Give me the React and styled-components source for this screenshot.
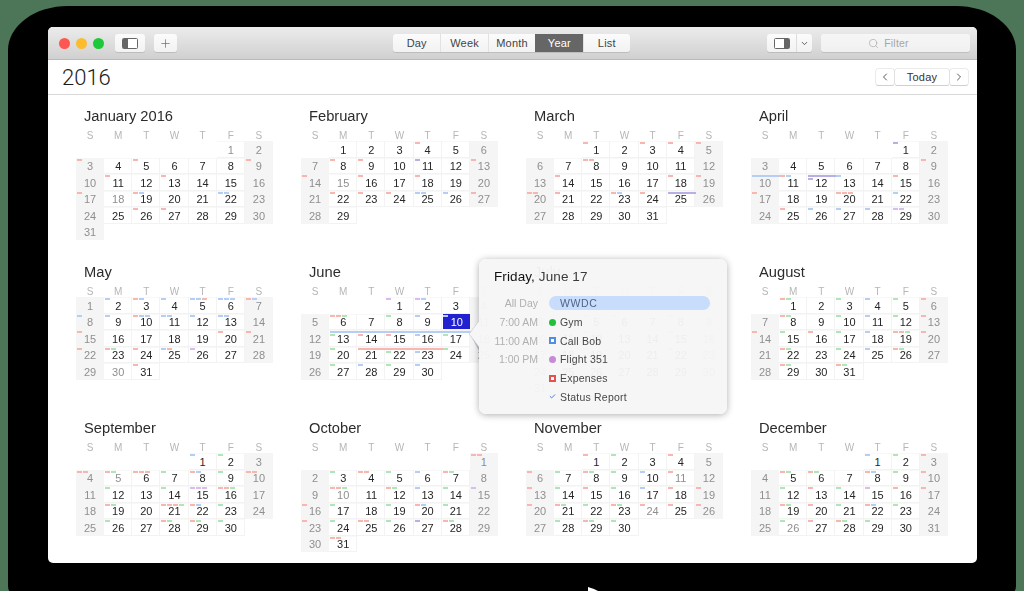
import React from "react";
import styled, { createGlobalStyle } from "styled-components";
import { Check, ChevronDown, ChevronLeft, ChevronRight, Plus, Search } from "lucide-react";

const Global = createGlobalStyle`
  html, body { margin: 0; padding: 0; width: 1024px; height: 591px; overflow: hidden; background: #4d7557; }
  * { box-sizing: border-box; }
  body { font-family: "Liberation Sans", Arial, sans-serif; }
`;

const COLORS = { r: "#f7b7ae", b: "#b4cef6", g: "#b0e6b6", p: "#d8bcf0", v: "#b6b0e4" };

const EVENTS = [
  { 3: "r", 5: "r", 9: "r", 11: "r", 13: "r", 17: "r", 19: "rb", 22: "bb", 26: "r", 27: "r" },
  { 4: "r", 8: "r", 9: "r", 11: "v", 13: "r", 14: "r", 16: "r", 18: "r", 22: "r", 23: "r", 24: "r", 25: "bb", 26: "b", 27: "r" },
  { 1: "r", 3: "r", 4: "r", 5: "r", 8: "rr", 14: "r", 18: "r", 19: "r", 20: "rr", 21: "r", 23: "rb", 24: "r", 25: "V" },
  { 1: "v", 9: "r", 10: "B", 11: "rb", 12: "Vv", 13: "b", 15: "r", 17: "r", 20: "rrr", 22: "b", 25: "r", 26: "b", 27: "b", 28: "b", 29: "pp" },
  { 2: "b", 3: "rb", 4: "b", 5: "bbr", 6: "bbb", 7: "rb", 8: "b", 9: "b", 10: "rbb", 11: "bb", 12: "b", 13: "bb", 15: "r", 20: "r", 21: "r", 22: "r", 23: "rg", 24: "r", 25: "br", 26: "p", 31: "r" },
  { 1: "p", 2: "pb", 6: "rrg", 8: "g", 9: "b", 10: "b", 13: "Bg", 14: "Br", 15: "Br", 16: "Bb", 17: "Bg", 20: "g", 21: "R", 22: "Rg", 23: "Rb", 24: "g", 27: "g", 28: "b", 29: "g", 30: "b" },
  { 1: "b", 5: "g", 6: "b", 8: "r", 12: "g", 15: "r", 19: "g", 22: "r", 26: "g" },
  { 1: "rg", 3: "g", 4: "b", 5: "g", 6: "r", 8: "rg", 10: "g", 11: "b", 12: "g", 13: "r", 14: "r", 15: "g", 16: "r", 17: "g", 18: "b", 19: "rrg", 20: "r", 22: "rg", 24: "g", 25: "b", 26: "rg", 29: "rg", 31: "rg" },
  { 1: "b", 2: "g", 4: "rr", 5: "rg", 6: "rrr", 7: "g", 8: "rb", 9: "g", 10: "rr", 12: "g", 14: "g", 15: "ppp", 16: "rrg", 19: "rg", 21: "rrrg", 22: "rb", 23: "g", 26: "g", 28: "rg", 29: "rg", 30: "g" },
  { 1: "rr", 3: "g", 4: "rr", 5: "g", 6: "b", 7: "rg", 10: "rrg", 12: "rg", 13: "b", 14: "g", 15: "p", 16: "r", 17: "g", 19: "g", 20: "rb", 21: "g", 23: "r", 24: "g", 25: "rr", 26: "g", 27: "v", 28: "rg", 31: "rr" },
  { 1: "r", 2: "g", 4: "r", 6: "r", 7: "g", 8: "rg", 9: "g", 10: "b", 11: "r", 13: "r", 14: "g", 15: "r", 16: "g", 17: "b", 18: "r", 19: "r", 20: "r", 21: "rg", 22: "g", 23: "rg", 24: "r", 25: "r", 26: "r", 28: "g", 29: "rg", 30: "g" },
  { 1: "b", 2: "g", 3: "r", 5: "rg", 6: "rg", 8: "rb", 9: "g", 10: "r", 12: "g", 13: "r", 14: "g", 15: "p", 16: "r", 17: "r", 19: "rg", 20: "r", 21: "g", 22: "rb", 23: "g", 26: "g", 27: "r", 28: "rg", 29: "g" },
];

const HOLIDAYS = { 0: [1, 18], 1: [15], 4: [30], 6: [4], 8: [5], 9: [10], 10: [11, 24], 11: [26] };
const NAMES = ["January 2016", "February", "March", "April", "May", "June", "July", "August", "September", "October", "November", "December"];
const WEEK = ["S", "M", "T", "W", "T", "F", "S"];

const Frame = styled.div`
  width: 1008px;
  height: 592px;
  margin: 6px 8px 0;
  padding: 21px 39px 0 40px;
  background: #000;
  border-radius: 60px 60px 14px 14px / 44px 44px 12px 12px;
  position: relative;
`;
const Win = styled.div`
  position: relative;
  width: 929px;
  height: 536px;
  background: #fff;
  border-radius: 5px;
  overflow: hidden;
  will-change: opacity;
`;
const TitleBar = styled.div`
  height: 33px;
  display: grid;
  grid-template-columns: 1fr auto 1fr;
  align-items: center;
  padding: 0 7px 0 11px;
  background: linear-gradient(#ececec, #d0d0d0);
  border-bottom: 1px solid #b9b9b9;
`;
const Left = styled.div`display: flex; align-items: center;`;
const Right = styled.div`display: flex; align-items: center; justify-content: flex-end;`;
const Light = styled.span`
  width: 11px;
  height: 11px;
  margin-right: 6px;
  border-radius: 50%;
  background: ${(p) => p.$c};
`;
const ToolBtn = styled.div`
  height: 18px;
  width: ${(p) => p.$w}px;
  margin-left: ${(p) => p.$ml || 0}px;
  display: flex;
  align-items: center;
  justify-content: center;
  background: linear-gradient(#fbfbfb, #f2f2f2);
  border-radius: 3px;
  box-shadow: 0 1px 0 #bdbdbd;
  color: #6a6a6a;
`;
const Seg = styled.div`
  display: flex;
  height: 18px;
  border-radius: 3px;
  box-shadow: 0 1px 0 #bdbdbd;
  overflow: hidden;
  margin-right: 6px;
`;
const SegItem = styled.div`
  width: 47.4px;
  display: flex;
  align-items: center;
  justify-content: center;
  font-size: 11px;
  letter-spacing: 0.2px;
  color: ${(p) => (p.$on ? "#fff" : "#444")};
  background: ${(p) => (p.$on ? "#666" : "linear-gradient(#fbfbfb,#f2f2f2)")};
  border-left: 1px solid ${(p) => (p.$on ? "#666" : "#e2e2e2")};
  &:first-child { border-left: 0; }
`;
const ViewBtn = styled.div`
  display: flex;
  width: 45px;
  height: 18px;
  margin-right: 9px;
  border-radius: 3px;
  box-shadow: 0 1px 0 #bdbdbd;
  background: linear-gradient(#fbfbfb, #f2f2f2);
`;
const ViewMain = styled.div`
  width: 30px;
  display: flex;
  align-items: center;
  justify-content: center;
  border-right: 1px solid #dcdcdc;
`;
const ViewArrow = styled.div`
  flex: 1;
  display: flex;
  align-items: center;
  justify-content: center;
  color: #555;
`;
const Filter = styled.div`
  width: 149px;
  height: 18px;
  display: flex;
  align-items: center;
  justify-content: center;
  gap: 5px;
  padding-right: 14px;
  border-radius: 3px;
  box-shadow: 0 1px 0 #c0c0c0;
  background: linear-gradient(#f6f6f6, #f0f0f0);
  color: #a6a6a6;
  font-size: 10.5px;
  letter-spacing: 0.2px;
`;
const YearBar = styled.div`
  height: 35px;
  display: flex;
  align-items: center;
  justify-content: space-between;
  padding: 0 9px 0 14px;
  border-bottom: 1px solid #d9d9d9;
`;
const YearTitle = styled.div`
  font-family: Roboto, "Liberation Sans", sans-serif;
  font-weight: 300;
  font-size: 22px;
  color: #1c1c1c;
`;
const Nav = styled.div`display: flex; align-items: center; gap: 1px;`;
const NavBtn = styled.div`
  height: 16px;
  width: ${(p) => p.$w}px;
  display: flex;
  align-items: center;
  justify-content: center;
  border-radius: 2px;
  background: #fff;
  color: #333;
  font-size: 11px;
  letter-spacing: 0.2px;
  box-shadow: 0 0 0 0.5px #d8d8d8, 0 1px 0 #c8c8c8;
`;
const Months = styled.div`
  display: grid;
  grid-template-columns: repeat(4, 225px);
  grid-auto-rows: 156px;
  padding: 11px 0 0 28px;
`;
const Month = styled.div`display: flex; flex-direction: column;`;
const MonthName = styled.div`
  height: 19px;
  line-height: 21px;
  padding-left: 8px;
  font-size: 14.7px;
  color: #2c2c2c;
`;
const Week = styled.div`
  display: grid;
  grid-template-columns: repeat(7, 28.15px);
  height: 16px;
  padding-top: 3px;
`;
const WeekDay = styled.div`
  text-align: center;
  font-size: 10px;
  line-height: 15px;
  color: #b6b6b6;
`;
const Days = styled.div`
  display: grid;
  grid-template-columns: repeat(7, 28.15px);
  grid-auto-rows: 16.5px;
`;
const Day = styled.div`
  position: relative;
  grid-column-start: ${(p) => p.$start || "auto"};
  display: flex;
  align-items: center;
  justify-content: center;
  font-size: 11px;
  padding-top: 1px;
  color: ${(p) => (p.$dim ? "#8f8f8f" : "#262626")};
  background: ${(p) => (p.$weekend ? "#f5f5f5" : "#fff")};
  box-shadow: ${(p) => (p.$weekend ? "none" : "inset -1px -1px 0 #f3f3f3, inset 0 1px 0 #f8f8f8")};
`;
const Selected = styled.span`
  position: absolute;
  inset: 0 -1px 1px 1px;
  display: flex;
  align-items: center;
  justify-content: center;
  padding-top: 1px;
  background: #2121cf;
  color: #fff;
`;
const Marks = styled.div`
  position: absolute;
  top: 1px;
  left: 1px;
  right: -1px;
  display: flex;
  flex-wrap: wrap;
  gap: 1px;
  z-index: 1;
`;
const Mark = styled.i`
  height: 2px;
  width: ${(p) => (p.$wide ? "100%" : "5px")};
  background: ${(p) => p.$c};
`;
const Popover = styled.div`
  position: absolute;
  left: 431px;
  top: 232px;
  width: 248px;
  height: 155px;
  z-index: 3;
  padding-top: 9px;
  background: rgba(246, 246, 246, 0.96);
  border-radius: 7px;
  box-shadow: 0 1px 7px rgba(0, 0, 0, 0.32);
`;
const Tail = styled.svg`
  position: absolute;
  left: -10px;
  top: 62px;
  overflow: visible;
`;
const PopTitle = styled.div`
  padding-left: 15px;
  height: 18px;
  line-height: 18px;
  font-size: 13.5px;
  color: #3a3a3a;
  letter-spacing: 0.1px;
  b { font-weight: 400; color: #111; }
`;
const PopRows = styled.div`
  display: grid;
  grid-template-columns: 59px 1fr;
  grid-auto-rows: 18.7px;
  column-gap: 11px;
  align-items: center;
  padding-top: 8px;
`;
const Time = styled.div`
  text-align: right;
  font-size: 10.5px;
  color: #b0b0b0;
`;
const Item = styled.div`
  display: flex;
  align-items: center;
  gap: 4px;
  font-size: 10.5px;
  letter-spacing: 0.2px;
  color: #474747;
`;
const Pill = styled.div`
  width: 161px;
  height: 14px;
  line-height: 14px;
  padding-left: 11px;
  border-radius: 7px;
  background: #c8dcfb;
  color: #50648a;
  font-size: 10.5px;
  letter-spacing: 0.6px;
`;
const GlyphBox = styled.span`
  width: 7px;
  height: 7px;
  display: flex;
  align-items: center;
  justify-content: center;
  flex: none;
`;
const Dot = styled(GlyphBox)`
  border-radius: 50%;
  background: ${(p) => p.$c};
`;
const Box = styled(GlyphBox)`
  border: 2px solid ${(p) => p.$c};
  background: #fff;
`;
const Cursor = styled.svg`
  position: absolute;
  left: 580px;
  top: 581px;
`;

function MonthView({ index }) {
  const count = new Date(2016, index + 1, 0).getDate();
  const offset = new Date(2016, index, 1).getDay();
  const days = Array.from({ length: count }, (_, i) => i + 1);
  return (
    <Month>
      <MonthName>{NAMES[index]}</MonthName>
      <Week>
        {WEEK.map((w, i) => (
          <WeekDay key={i}>{w}</WeekDay>
        ))}
      </Week>
      <Days>
        {days.map((d) => {
          const dow = (offset + d - 1) % 7;
          const weekend = dow === 0 || dow === 6;
          const dim = weekend || (HOLIDAYS[index] || []).includes(d);
          const marks = EVENTS[index][d] || "";
          const selected = index === 5 && d === 10;
          return (
            <Day key={d} $start={d === 1 ? offset + 1 : 0} $weekend={weekend} $dim={dim}>
              {selected ? <Selected>{d}</Selected> : d}
              <Marks>
                {[...marks].map((m, i) => {
                  const wide = m === m.toUpperCase();
                  return <Mark key={i} $wide={wide} $c={COLORS[m.toLowerCase()]} />;
                })}
              </Marks>
            </Day>
          );
        })}
      </Days>
    </Month>
  );
}

const SidebarIcon = ({ side }) => (
  <svg width="16" height="11" viewBox="0 0 16 11">
    <rect x="0.5" y="0.5" width="15" height="10" rx="1" fill="#fff" stroke="#666" />
    <rect x={side === "left" ? 1 : 10} y="1" width="5" height="9" fill="#666" />
  </svg>
);

const ROWS = [
  ["All Day", null],
  ["7:00 AM", "Gym", <Dot $c="#1fc13a" />],
  ["11:00 AM", "Call Bob", <Box $c="#4c8ee8" />],
  ["1:00 PM", "Flight 351", <Dot $c="#c78ad8" />],
  ["", "Expenses", <Box $c="#e8504c" />],
  ["", "Status Report", <GlyphBox><Check size={9} strokeWidth={3} color="#2f6fe0" /></GlyphBox>],
];

export default function App() {
  return (
    <>
      <Global />
      <Frame>
        <Win>
          <TitleBar>
            <Left>
              <Light $c="#fc5753" />
              <Light $c="#fdbc2c" />
              <Light $c="#1fc83a" />
              <ToolBtn $w={30} $ml={5}><SidebarIcon side="left" /></ToolBtn>
              <ToolBtn $w={23} $ml={9}><Plus size={13} strokeWidth={1.3} /></ToolBtn>
            </Left>
            <Seg>
              {["Day", "Week", "Month", "Year", "List"].map((s) => (
                <SegItem key={s} $on={s === "Year"}>{s}</SegItem>
              ))}
            </Seg>
            <Right>
              <ViewBtn>
                <ViewMain><SidebarIcon side="right" /></ViewMain>
                <ViewArrow><ChevronDown size={9} strokeWidth={2.5} /></ViewArrow>
              </ViewBtn>
              <Filter><Search size={11} strokeWidth={1.4} />Filter</Filter>
            </Right>
          </TitleBar>
          <YearBar>
            <YearTitle>2016</YearTitle>
            <Nav>
              <NavBtn $w={18}><ChevronLeft size={12} strokeWidth={1.6} /></NavBtn>
              <NavBtn $w={54}>Today</NavBtn>
              <NavBtn $w={18}><ChevronRight size={12} strokeWidth={1.6} /></NavBtn>
            </Nav>
          </YearBar>
          <Months>
            {NAMES.map((_, i) => (
              <MonthView key={i} index={i} />
            ))}
          </Months>
          <Popover>
            <Tail width="10" height="26" viewBox="0 0 10 26">
              <path d="M10 14 L2 15 L10 30 Z" fill="rgba(110,110,130,0.45)" />
              <path d="M10 0 L0 13 L10 26 Z" fill="#f6f6f6" />
              <path d="M10 0 L0 13 L10 26" stroke="#c9c9c9" strokeWidth="0.7" fill="none" />
            </Tail>
            <PopTitle><b>Friday,</b> June 17</PopTitle>
            <PopRows>
              {ROWS.map(([time, label, glyph]) => (
                <React.Fragment key={time + label}>
                  <Time>{time}</Time>
                  {label ? (
                    <Item>{glyph}{label}</Item>
                  ) : (
                    <Pill>WWDC</Pill>
                  )}
                </React.Fragment>
              ))}
            </PopRows>
          </Popover>
        </Win>
      </Frame>
      <Cursor width="20" height="10" viewBox="0 0 20 10">
        <path d="M8 6 L14 8 L18 10 L8 10 Z" fill="#fff" />
      </Cursor>
    </>
  );
}
